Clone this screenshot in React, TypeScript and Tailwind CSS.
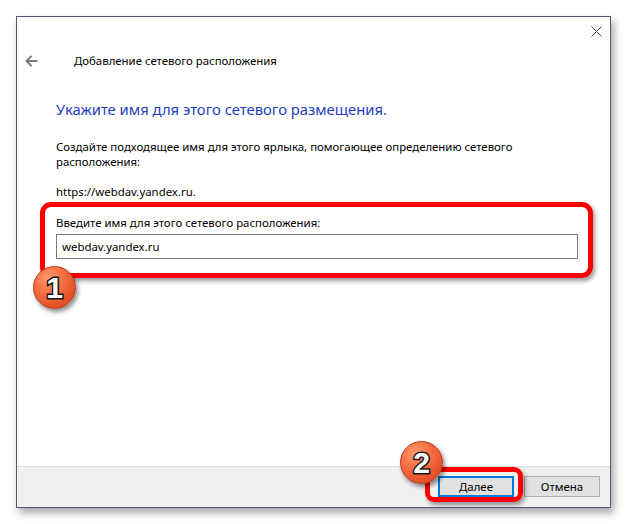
import { type ReactNode } from "react";

function Badge({ n, className }: { n: string; className: string }) {
  return (
    <div
      className={`absolute flex h-[43px] w-[43px] items-center justify-center rounded-full border border-[#b8361a] bg-[radial-gradient(circle_at_35%_28%,#ff9a6e_0%,#f4683c_45%,#d2391a_100%)] shadow-[2px_3px_4px_rgba(0,0,0,0.45)] ${className}`}
    >
      <span className="font-['Liberation_Sans',Arial,sans-serif] text-[30px] font-bold leading-none text-white [-webkit-text-stroke:3px_#161616] [paint-order:stroke_fill]">
        {n}
      </span>
    </div>
  );
}

function Button({ children, primary }: { children: ReactNode; primary?: boolean }) {
  return (
    <button
      type="button"
      className={
        primary
          ? "h-[21px] w-[76px] border-2 border-[#0078d7] bg-[#e1e1e1] text-[11.4px] leading-none text-black"
          : "h-[21px] w-[76px] border border-[#adadad] bg-[#e1e1e1] text-[11.4px] leading-none text-black"
      }
    >
      {children}
    </button>
  );
}

export default function App() {
  return (
    <div className="relative h-[524px] w-[627px] overflow-hidden bg-white pl-4 pt-4 font-['Segoe_UI','Noto_Sans',sans-serif] text-[11.4px] text-black">
      <div className="flex h-[492px] w-[595px] flex-col border border-[#5b5479] bg-white shadow-[3px_5px_8px_rgba(0,0,0,0.35)]">
        {/* title bar */}
        <div className="flex h-[30px] justify-end pr-[8px] pt-[9px]">
          <svg width="11" height="11" viewBox="0 0 11 11" className="text-[#444]">
            <path d="M0.5 0.5 L10.5 10.5 M10.5 0.5 L0.5 10.5" stroke="currentColor" strokeWidth="1" fill="none" />
          </svg>
        </div>

        <div className="mt-[5px] flex h-[18px] items-center pl-[8px]">
          <svg width="13" height="12" viewBox="0 0 13 12" className="text-[#7a7a7a]">
            <path d="M1.5 6 H12.5 M6.5 1 L1.5 6 L6.5 11" stroke="currentColor" strokeWidth="1.8" fill="none" />
          </svg>
          <span className="ml-[36px] leading-[18px]">Добавление сетевого расположения</span>
        </div>

        <div className="flex flex-1 flex-col pl-[39px] pr-[32px]">
          <h1 className="mt-[29px] text-[14.8px] leading-[21px] text-[#1e3fbf]">
            Укажите имя для этого сетевого размещения.
          </h1>
          <p className="mt-[19px] leading-[15px]">
            Создайте подходящее имя для этого ярлыка, помогающее определению сетевого
          </p>
          <p className="leading-[15px]">расположения:</p>
          <p className="mt-[15px] leading-[15px]">https://webdav.yandex.ru.</p>
          <p className="mt-[16px] leading-[15px]">Введите имя для этого сетевого расположения:</p>
          <div className="mt-[4px] flex h-[25px] items-center border border-[#7a7a7a] px-[5px]">
            webdav.yandex.ru
          </div>
        </div>

        <div className="flex h-[41px] justify-end gap-[10px] border-t border-[#dfdfdf] bg-[#f0f0f0] pr-[10px] pt-[9px]">
          <Button primary>Далее</Button>
          <Button>Отмена</Button>
        </div>
      </div>

      {/* annotations */}
      <div className="absolute left-[40px] top-[202px] h-[76px] w-[553px] rounded-[11px] border-[5px] border-[#ff0000] shadow-[2px_3px_4px_rgba(0,0,0,0.4)]" />
      <div className="absolute left-[425px] top-[467px] h-[35px] w-[98px] rounded-[9px] border-[5px] border-[#ff0000] shadow-[2px_3px_4px_rgba(0,0,0,0.4)]" />
      <Badge n="1" className="left-[33px] top-[266px]" />
      <Badge n="2" className="left-[400px] top-[441px]" />
    </div>
  );
}
